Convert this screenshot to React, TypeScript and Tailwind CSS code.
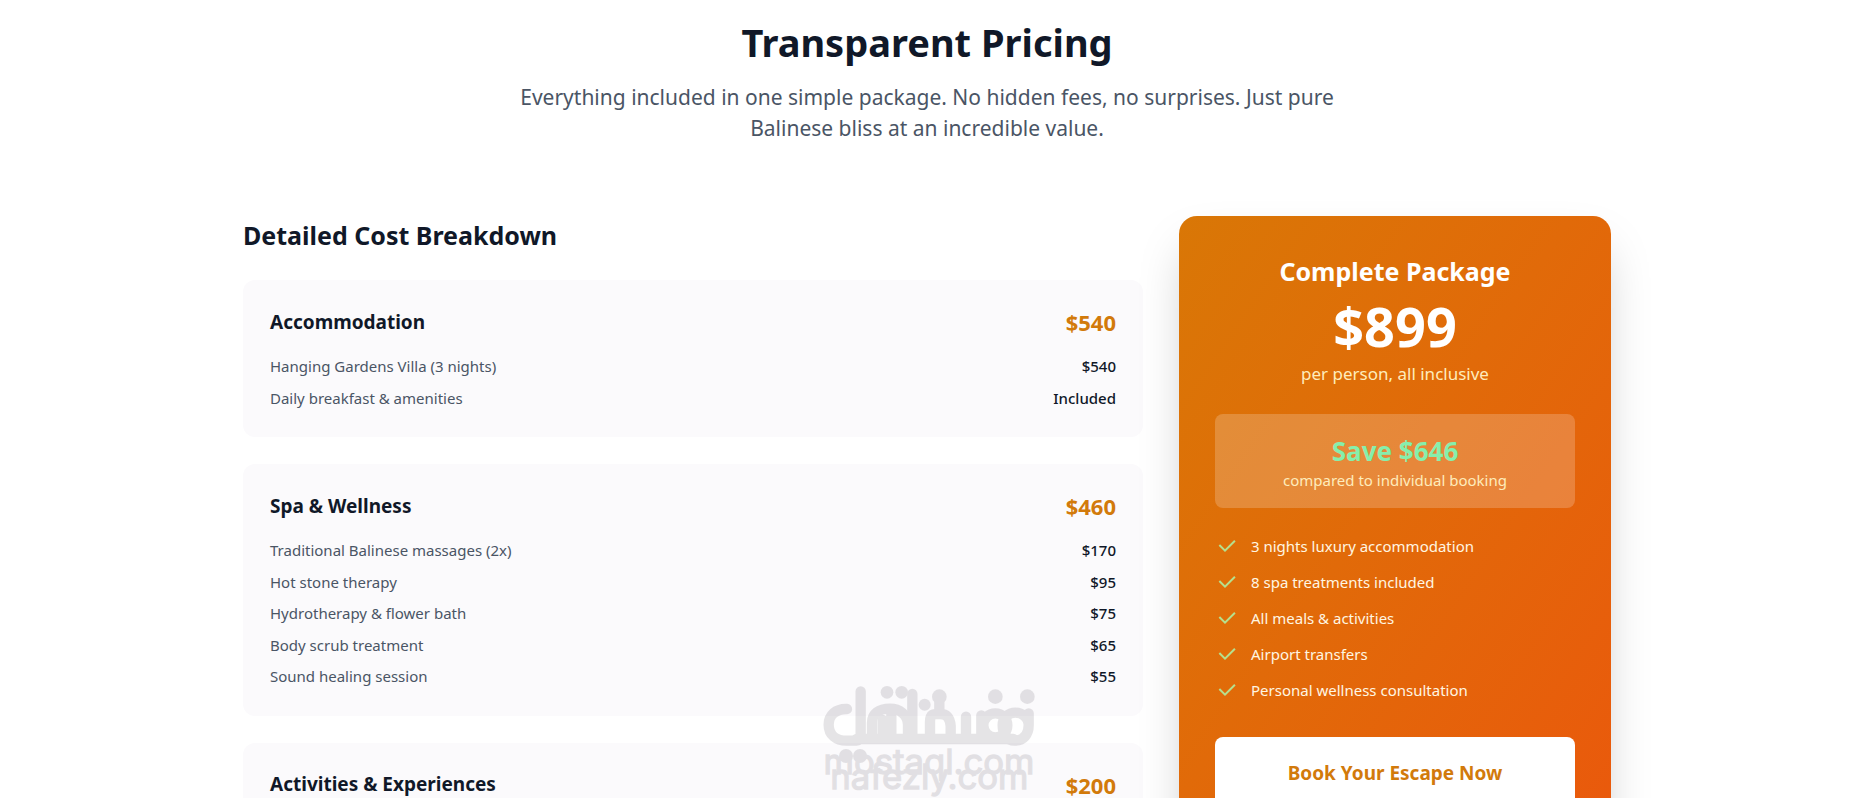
import { RiCheckLine } from 'react-icons/ri';

type CostItem = { label: string; price: string };
type CostCategory = { title: string; total: string; items: CostItem[] };

const categories: CostCategory[] = [
  {
    title: 'Accommodation',
    total: '$540',
    items: [
      { label: 'Hanging Gardens Villa (3 nights)', price: '$540' },
      { label: 'Daily breakfast & amenities', price: 'Included' },
    ],
  },
  {
    title: 'Spa & Wellness',
    total: '$460',
    items: [
      { label: 'Traditional Balinese massages (2x)', price: '$170' },
      { label: 'Hot stone therapy', price: '$95' },
      { label: 'Hydrotherapy & flower bath', price: '$75' },
      { label: 'Body scrub treatment', price: '$65' },
      { label: 'Sound healing session', price: '$55' },
    ],
  },
  {
    title: 'Activities & Experiences',
    total: '$200',
    items: [],
  },
];

const features = [
  '3 nights luxury accommodation',
  '8 spa treatments included',
  'All meals & activities',
  'Airport transfers',
  'Personal wellness consultation',
];

function CostCard({ category }: { category: CostCategory }) {
  return (
    <div className="bg-[#fbfafc] rounded-xl px-[27px] pt-[27px] pb-7">
      <div className="flex items-center justify-between mb-[18px]">
        <h4 className="text-[19px] font-bold text-gray-900">{category.title}</h4>
        <span className="text-[22px] leading-[30px] font-bold text-[#d27a0b]">{category.total}</span>
      </div>
      <dl className="flex flex-col gap-[9px] text-[15px] leading-normal">
        {category.items.map((item) => (
          <div key={item.label} className="flex items-center justify-between">
            <dt className="text-gray-600">{item.label}</dt>
            <dd className="font-medium text-gray-900">{item.price}</dd>
          </div>
        ))}
      </dl>
    </div>
  );
}

function PackageCard() {
  return (
    <aside className="bg-linear-to-br from-[#d97706] to-[#ea580c] rounded-[18px] px-9 pt-9 pb-12 text-white shadow-2xl">
      <div className="text-center mb-[27px]">
        <h3 className="text-[25px] leading-[38px] font-bold mb-[9px]">Complete Package</h3>
        <div className="text-[54px] leading-none font-bold mb-[7px]">$899</div>
        <p className="text-[17px] leading-[27px] text-[#feecbc]">per person, all inclusive</p>
      </div>

      <div className="bg-white/20 rounded-lg p-[18px] mb-[27px] text-center">
        <div className="text-[26px] leading-[38px] font-bold text-[#86efac]">Save $646</div>
        <div className="text-[15px] leading-5 text-[#feecbc]">compared to individual booking</div>
      </div>

      <ul className="flex flex-col gap-[14px] mb-9">
        {features.map((feature) => (
          <li key={feature} className="flex items-center gap-3 h-[22px] text-[15px] text-[#fff6e2]">
            <RiCheckLine className="size-6 text-[#b5e08e]" />
            <span>{feature}</span>
          </li>
        ))}
      </ul>

      <button className="w-full bg-white text-[#d27a0b] text-[19px] leading-9 font-bold py-[18px] rounded-lg">
        Book Your Escape Now
      </button>
    </aside>
  );
}

function Watermark() {
  return (
    <svg
      className="absolute bottom-0 left-1/2 -translate-x-1/2 w-[220px] h-[116px] opacity-[0.11] pointer-events-none"
      viewBox="117 66 660 348"
      fill="#1c1424"
      aria-hidden="true"
    >
      {/* Overlaid logo marks */}
      <g fill="none" stroke="#1c1424" strokeWidth="31" strokeLinecap="round" strokeLinejoin="round">
        <path d="M201 147C167 146 146 166 146 194C146 224 168 242 200 242H228Q242 240 242 222V94" />
        <path d="M230 237H700" />
        <path d="M276 236V188C276 162 296 146 330 146C358 146 384 164 384 194V232" />
        <path d="M308 236V180M334 236V150" />
        <path d="M397 102V236" />
        <path d="M450 236V186C450 160 462 162 480 162C502 162 510 176 512 198V232" />
        <path d="M478 118V160M558 170V232M604 166V232" />
        <circle cx="646" cy="196" r="36" />
        <path d="M746 160V196C746 224 730 242 704 242C680 242 668 220 668 196C668 172 686 158 706 158C726 158 744 172 746 192" />
      </g>
      <circle cx="321" cy="97" r="19" />
      <circle cx="365" cy="97" r="19" />
      <circle cx="434" cy="134" r="18" />
      <circle cx="478" cy="110" r="22" />
      <circle cx="646" cy="110" r="22" />
      <circle cx="742" cy="110" r="22" />
      <circle cx="198" cy="288" r="21" />
      <circle cx="240" cy="288" r="21" />
      <g textAnchor="middle" stroke="#1c1424" strokeWidth="4" fontFamily="Inter, sans-serif">
        <text x="447" y="343" fontSize="104">mostaql.com</text>
        <text x="448" y="388" fontSize="104">nafezly.com</text>
      </g>
    </svg>
  );
}

export default function App() {
  return (
    <div className="relative h-screen overflow-hidden bg-white font-['Noto_Sans','Open_Sans',sans-serif]">
      <section className="pt-[18px] pr-1">
        <div className="max-w-[1440px] mx-auto px-9">
          {/* Header */}
          <div className="text-center mb-[72px]">
            <h2 className="text-[38px] leading-[48px] font-bold text-gray-900 mb-4">
              Transparent Pricing
            </h2>
            <p className="max-w-[864px] mx-auto text-[21px] leading-[31px] text-gray-600">
              Everything included in one simple package. No hidden fees, no surprises. Just pure
              Balinese bliss at an incredible value.
            </p>
          </div>

          <div className="grid grid-cols-1 lg:grid-cols-3 gap-9 items-start">
            {/* Cost breakdown */}
            <div className="lg:col-span-2">
              <h3 className="text-[25px] leading-[38px] font-bold text-gray-900 mb-[26px]">
                Detailed Cost Breakdown
              </h3>
              <div className="flex flex-col gap-[27px]">
                {categories.map((category) => (
                  <CostCard key={category.title} category={category} />
                ))}
              </div>
            </div>

            <PackageCard />
          </div>
        </div>
      </section>
      <Watermark />
    </div>
  );
}
